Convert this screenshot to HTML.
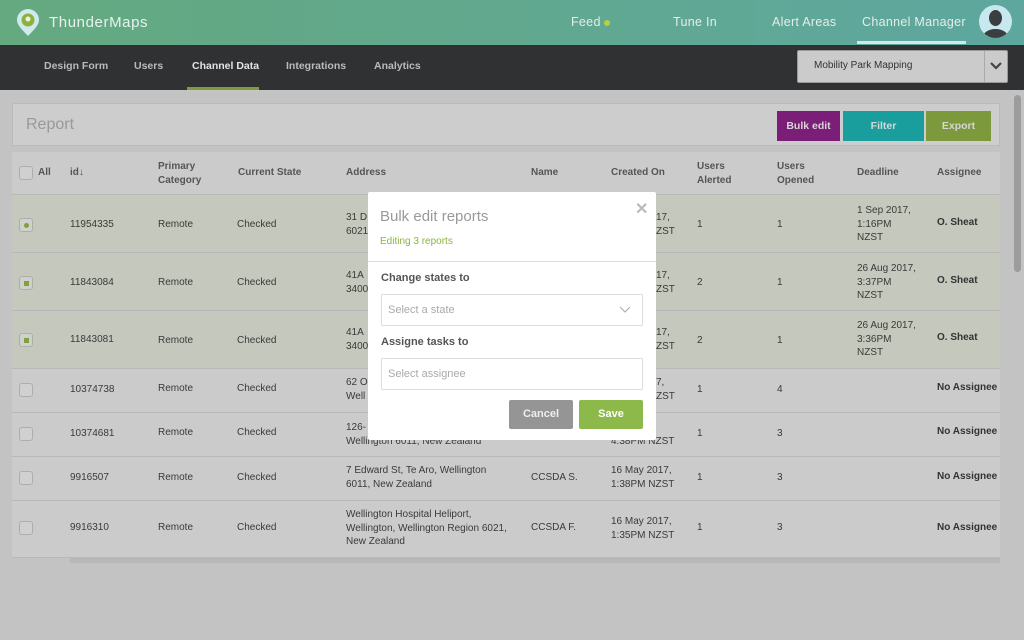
<!DOCTYPE html>
<html><head><meta charset="utf-8"><style>
*{box-sizing:border-box;margin:0;padding:0}
body{width:1024px;height:640px;overflow:hidden;background:#c3c3c3;font-family:"Liberation Sans",sans-serif;position:relative;color:#333}
.a{position:absolute;white-space:nowrap}
.hdr{left:0;top:0;width:1024px;height:45px;background:linear-gradient(90deg,#64a97f,#5ea79f)}
.nav{color:#e3eee9;font-size:12.5px;top:15px;letter-spacing:.3px}
.sub{left:0;top:45px;width:1024px;height:45px;background:#2f3133}
.sn{color:#b9bbbc;font-size:10.5px;font-weight:bold;top:60px}
.t{font-size:10px;color:#3a3a3a;line-height:13.5px}
.h{font-size:10px;color:#555;font-weight:bold;line-height:13.5px}
.cb{width:14px;height:14px;border:1px solid #adadad;border-radius:3px;background:#d0d0d0}
.row{left:12px;width:988px;border-bottom:1px solid #b8b8b8}
.btn{color:#d6d6d6;font-size:10.5px;font-weight:bold;text-align:center;line-height:30px;height:30px;top:111px}
</style></head><body>
<div class="a hdr"></div>
<svg class="a" style="left:16px;top:9px" width="24" height="28" viewBox="0 0 24 28"><path d="M12 27 C4 19 1 15 1 11 A11 11 0 0 1 23 11 C23 15 20 19 12 27Z" fill="#cfe9ee"/><circle cx="12" cy="11" r="6.5" fill="#8bb23c"/><circle cx="12" cy="10" r="2.5" fill="#f1f1e0"/></svg>
<div class="a" style="left:49px;top:14px;color:#e8f2ee;font-size:15px;letter-spacing:.6px">ThunderMaps</div>
<div class="a nav" style="left:571px">Feed</div>
<div class="a" style="left:604px;top:20px;width:6px;height:6px;border-radius:50%;background:#b5d23e"></div>
<div class="a nav" style="left:673px">Tune In</div>
<div class="a nav" style="left:772px">Alert Areas</div>
<div class="a nav" style="left:862px">Channel Manager</div>
<div class="a" style="left:857px;top:41px;width:109px;height:3px;background:#cfe9ec"></div>
<svg class="a" style="left:979px;top:5px" width="33" height="33" viewBox="0 0 33 33"><circle cx="16.5" cy="16.5" r="16.5" fill="#c8e8ef"/><clipPath id="c"><circle cx="16.5" cy="16.5" r="16.5"/></clipPath><g clip-path="url(#c)" fill="#3b3d40"><ellipse cx="16.5" cy="13" rx="6.5" ry="8"/><ellipse cx="16.5" cy="33" rx="13" ry="9"/></g></svg>
<div class="a sub"></div>
<div class="a sn" style="left:44px">Design Form</div>
<div class="a sn" style="left:134px">Users</div>
<div class="a sn" style="left:192px;color:#e4e4e4">Channel Data</div>
<div class="a sn" style="left:286px">Integrations</div>
<div class="a sn" style="left:374px">Analytics</div>
<div class="a" style="left:187px;top:87px;width:72px;height:3px;background:#7f9c3c"></div>
<div class="a" style="left:797px;top:50px;width:211px;height:33px;background:#cbcbcb;border-radius:2px;border:1px solid #999"></div>
<div class="a" style="left:984px;top:51px;width:1px;height:31px;background:#aaa"></div>
<div class="a" style="left:814px;top:60px;font-size:10px;color:#333">Mobility Park Mapping</div>
<svg class="a" style="left:990px;top:62px" width="12" height="8"><path d="M1 1 L6 6 L11 1" stroke="#444" stroke-width="2.2" fill="none"/></svg>
<div class="a" style="left:1014px;top:95px;width:7px;height:177px;background:#9c9c9c;border-radius:4px"></div>
<div class="a" style="left:12px;top:103px;width:988px;height:43px;background:#cdcdcd;border:1px solid #bbb"></div>
<div class="a" style="left:26px;top:116px;font-size:16px;color:#999">Report</div>
<div class="a btn" style="left:777px;width:63px;background:#7a1e77">Bulk edit</div>
<div class="a btn" style="left:843px;width:81px;background:#1a9e9d">Filter</div>
<div class="a btn" style="left:926px;width:65px;background:#7c9a3c">Export</div>
<div class="a" style="left:12px;top:152px;width:988px;height:406px;background:#cbcbcb"></div>
<div class="a" style="left:12px;top:195px;width:988px;height:174px;background:#c5c8bd"></div>
<div class="a row" style="top:152px;height:43px"></div>
<div class="a row" style="top:195px;height:58px"></div>
<div class="a row" style="top:253px;height:58px"></div>
<div class="a row" style="top:311px;height:58px"></div>
<div class="a row" style="top:369px;height:44px"></div>
<div class="a row" style="top:413px;height:44px"></div>
<div class="a row" style="top:457px;height:44px"></div>
<div class="a row" style="top:501px;height:57px"></div>
<div class="a" style="left:70px;top:558px;width:930px;height:5px;background:#b8b8b8"></div>
<div class="a cb" style="left:19px;top:166px"></div>
<div class="a h" style="left:38px;top:166px">All</div>
<div class="a h" style="left:70px;top:166px">id↓</div>
<div class="a h" style="left:158px;top:160px">Primary<br>Category</div>
<div class="a h" style="left:238px;top:166px">Current State</div>
<div class="a h" style="left:346px;top:166px">Address</div>
<div class="a h" style="left:531px;top:166px">Name</div>
<div class="a h" style="left:611px;top:166px">Created On</div>
<div class="a h" style="left:697px;top:160px">Users<br>Alerted</div>
<div class="a h" style="left:777px;top:160px">Users<br>Opened</div>
<div class="a h" style="left:857px;top:166px">Deadline</div>
<div class="a h" style="left:937px;top:166px">Assignee</div>

<div class="a cb" style="left:19px;top:218px"></div><div class="a" style="left:24px;top:223px;width:5px;height:5px;border-radius:50%;background:#7fa23a"></div>
<div class="a t" style="left:70px;top:218px">11954335</div><div class="a t" style="left:158px;top:218px">Remote</div><div class="a t" style="left:237px;top:218px">Checked</div>
<div class="a t" style="left:346px;top:211px">31 D<br>6021</div><div class="a t" style="left:656px;top:211px">17,<br>ZST</div>
<div class="a t" style="left:697px;top:218px">1</div><div class="a t" style="left:777px;top:218px">1</div>
<div class="a t" style="left:857px;top:204px">1 Sep 2017,<br>1:16PM<br>NZST</div><div class="a h" style="left:937px;top:216px;color:#333">O. Sheat</div>

<div class="a cb" style="left:19px;top:276px"></div><div class="a" style="left:24px;top:281px;width:5px;height:5px;background:#7fa23a"></div>
<div class="a t" style="left:70px;top:276px">11843084</div><div class="a t" style="left:158px;top:276px">Remote</div><div class="a t" style="left:237px;top:276px">Checked</div>
<div class="a t" style="left:346px;top:269px">41A<br>3400</div><div class="a t" style="left:656px;top:269px">17,<br>ZST</div>
<div class="a t" style="left:697px;top:276px">2</div><div class="a t" style="left:777px;top:276px">1</div>
<div class="a t" style="left:857px;top:262px">26 Aug 2017,<br>3:37PM<br>NZST</div><div class="a h" style="left:937px;top:274px;color:#333">O. Sheat</div>

<div class="a cb" style="left:19px;top:333px"></div><div class="a" style="left:24px;top:338px;width:5px;height:5px;background:#7fa23a"></div>
<div class="a t" style="left:70px;top:333px">11843081</div><div class="a t" style="left:158px;top:334px">Remote</div><div class="a t" style="left:237px;top:334px">Checked</div>
<div class="a t" style="left:346px;top:326px">41A<br>3400</div><div class="a t" style="left:656px;top:326px">17,<br>ZST</div>
<div class="a t" style="left:697px;top:334px">2</div><div class="a t" style="left:777px;top:334px">1</div>
<div class="a t" style="left:857px;top:319px">26 Aug 2017,<br>3:36PM<br>NZST</div><div class="a h" style="left:937px;top:331px;color:#333">O. Sheat</div>

<div class="a cb" style="left:19px;top:383px"></div>
<div class="a t" style="left:70px;top:383px">10374738</div><div class="a t" style="left:158px;top:382px">Remote</div><div class="a t" style="left:237px;top:382px">Checked</div>
<div class="a t" style="left:346px;top:376px">62 O<br>Well</div><div class="a t" style="left:656px;top:376px">7,<br>ZST</div>
<div class="a t" style="left:697px;top:383px">1</div><div class="a t" style="left:777px;top:383px">4</div><div class="a h" style="left:937px;top:381px;color:#333">No Assignee</div>

<div class="a cb" style="left:19px;top:427px"></div>
<div class="a t" style="left:70px;top:427px">10374681</div><div class="a t" style="left:158px;top:426px">Remote</div><div class="a t" style="left:237px;top:426px">Checked</div>
<div class="a t" style="left:346px;top:421px">126-<br>Wellington 6011, New Zealand</div><div class="a t" style="left:611px;top:421px">&nbsp;&nbsp;&nbsp;&nbsp;&nbsp;&nbsp;&nbsp;&nbsp;&nbsp;&nbsp;&nbsp;&nbsp;7,<br>4:38PM NZST</div>
<div class="a t" style="left:697px;top:427px">1</div><div class="a t" style="left:777px;top:427px">3</div><div class="a h" style="left:937px;top:425px;color:#333">No Assignee</div>

<div class="a cb" style="left:19px;top:471px"></div>
<div class="a t" style="left:70px;top:471px">9916507</div><div class="a t" style="left:158px;top:471px">Remote</div><div class="a t" style="left:237px;top:471px">Checked</div>
<div class="a t" style="left:346px;top:464px">7 Edward St, Te Aro, Wellington<br>6011, New Zealand</div><div class="a t" style="left:531px;top:471px">CCSDA S.</div>
<div class="a t" style="left:611px;top:464px">16 May 2017,<br>1:38PM NZST</div>
<div class="a t" style="left:697px;top:471px">1</div><div class="a t" style="left:777px;top:471px">3</div><div class="a h" style="left:937px;top:470px;color:#333">No Assignee</div>

<div class="a cb" style="left:19px;top:521px"></div>
<div class="a t" style="left:70px;top:521px">9916310</div><div class="a t" style="left:158px;top:521px">Remote</div><div class="a t" style="left:237px;top:521px">Checked</div>
<div class="a t" style="left:346px;top:508px">Wellington Hospital Heliport,<br>Wellington, Wellington Region 6021,<br>New Zealand</div><div class="a t" style="left:531px;top:521px">CCSDA F.</div>
<div class="a t" style="left:611px;top:515px">16 May 2017,<br>1:35PM NZST</div>
<div class="a t" style="left:697px;top:521px">1</div><div class="a t" style="left:777px;top:521px">3</div><div class="a h" style="left:937px;top:521px;color:#333">No Assignee</div>

<div class="a" style="left:368px;top:192px;width:288px;height:248px;background:#fff;border-radius:2px"></div>
<div class="a" style="left:380px;top:208px;font-size:15px;color:#999">Bulk edit reports</div>
<div class="a" style="left:635px;top:199px;font-size:16px;font-weight:bold;color:#bbb">✕</div>
<div class="a" style="left:380px;top:236px;font-size:10px;color:#8ab53e">Editing 3 reports</div>
<div class="a" style="left:368px;top:261px;width:288px;height:1px;background:#ddd"></div>
<div class="a" style="left:381px;top:272px;font-size:11px;color:#555;font-weight:bold">Change states to</div>
<div class="a" style="left:381px;top:294px;width:262px;height:32px;border:1px solid #ddd;border-radius:2px"></div>
<div class="a" style="left:388px;top:304px;font-size:11px;color:#aaa">Select a state</div>
<svg class="a" style="left:619px;top:306px" width="12" height="7"><path d="M1 1 L6 6 L11 1" stroke="#aaa" stroke-width="1" fill="none"/></svg>
<div class="a" style="left:381px;top:336px;font-size:11px;color:#555;font-weight:bold">Assigne tasks to</div>
<div class="a" style="left:381px;top:358px;width:262px;height:32px;border:1px solid #ddd;border-radius:2px"></div>
<div class="a" style="left:388px;top:368px;font-size:11px;color:#aaa">Select assignee</div>
<div class="a" style="left:509px;top:400px;width:64px;height:29px;background:#959595;border-radius:2px;color:#eee;font-size:11px;font-weight:bold;text-align:center;line-height:29px">Cancel</div>
<div class="a" style="left:579px;top:400px;width:64px;height:29px;background:#8cb94a;border-radius:2px;color:#fff;font-size:11px;font-weight:bold;text-align:center;line-height:29px">Save</div>
</body></html>
